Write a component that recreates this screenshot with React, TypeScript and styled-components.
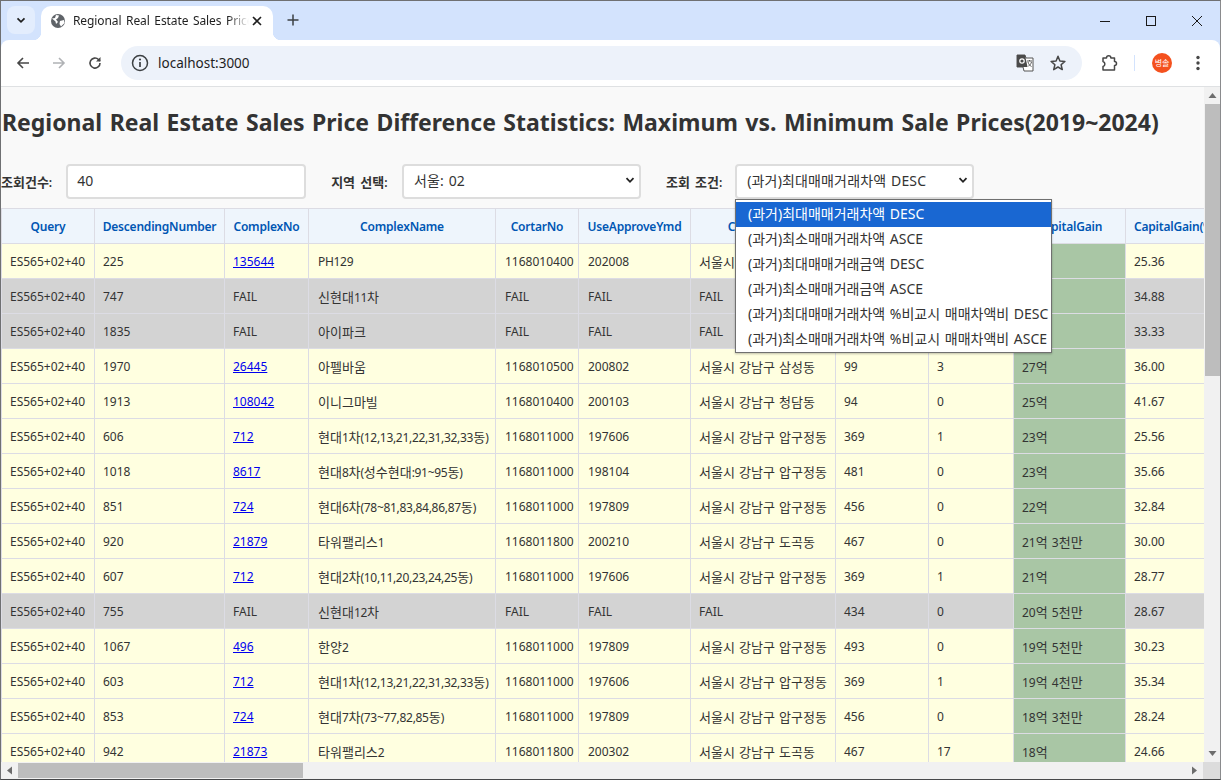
import React from "react";
import styled, { createGlobalStyle } from "styled-components";

const Global = createGlobalStyle`
  html, body { margin: 0; padding: 0; width: 1221px; height: 780px; overflow: hidden; background: #fff; }
  * { box-sizing: border-box; }
  body { font-family: "Noto Sans", "Noto Sans CJK KR", sans-serif; }
`;

const Win = styled.div`
  width: 1221px; height: 780px; display: flex; flex-direction: column;
  border: 1px solid #6f7072; border-right-color: #8a8b8d; border-bottom-color: #47484a; border-bottom-width: 1px;
  background: #d3e3fd; overflow: hidden; position: relative;
`;
const TabStrip = styled.div`
  height: 39px; flex: none; display: flex; align-items: flex-start; padding: 5px 0 0 6px; background: #d3e3fd;
`;
const TabSearch = styled.div`
  width: 28px; height: 28px; border-radius: 8px; background: #e3edfd; display: flex; align-items: center; justify-content: center;
`;
const Tab = styled.div`
  width: 232px; height: 34px; margin-left: 6px; background: #fff; border-radius: 10px 10px 0 0; display: flex; align-items: center;
  padding: 0 8px 5px 9px; position: relative;
  &::before, &::after { content: ""; position: absolute; bottom: 0; width: 8px; height: 8px; }
  &::before { left: -8px; background: radial-gradient(circle at 0 0, transparent 8px, #fff 8.5px); }
  &::after { right: -8px; background: radial-gradient(circle at 100% 0, transparent 8px, #fff 8.5px); }
`;
const TabTitle = styled.div`
  flex: 1; margin-left: 7px; font-size: 12px; letter-spacing: -0.1px; color: #1f1f1f; white-space: nowrap; overflow: hidden; word-spacing: 1.6px;
  -webkit-mask-image: linear-gradient(90deg, #000 88%, transparent 100%);
  mask-image: linear-gradient(90deg, #000 88%, transparent 100%);
`;
const NewTab = styled.div`
  margin: 4px 0 0 10px; width: 20px; height: 20px; display: flex; align-items: center; justify-content: center;
`;
const WinControls = styled.div`
  margin-left: auto; display: flex; margin-top: -5px;
`;
const WinBtn = styled.div`
  width: 46px; height: 40px; display: flex; align-items: center; justify-content: center;
`;
const Toolbar = styled.div`
  height: 47px; flex: none; background: #fff; border-radius: 8px 8px 0 0; border-bottom: 1px solid #dfe1e3;
  display: flex; align-items: center; padding: 0 0 1px 0;
`;
const NavBtn = styled.div<{ $ml: number }>`
  width: 20px; height: 20px; margin-left: ${(p) => p.$ml}px; display: flex; align-items: center; justify-content: center;
`;
const Omni = styled.div`
  width: 961px; height: 34px; margin-left: 16px; border-radius: 17px; background: #edf2fa; display: flex; align-items: center; padding: 0 14px 0 10px;
`;
const Url = styled.div`
  margin-left: 9px; font-size: 13.5px; color: #1f1f1f; flex: 1;
`;
const OmniIcon = styled.div<{ $ml: number }>`
  width: 20px; height: 20px; margin-left: ${(p) => p.$ml}px; display: flex; align-items: center; justify-content: center;
`;
const Sep = styled.div`
  width: 1px; height: 16px; background: #d3e3fd; margin: 0 17px 0 15px;
`;
const Avatar = styled.div`
  width: 20px; height: 20px; border-radius: 50%; background: #f4511e; color: #fff; font-size: 8px; display: flex; align-items: center; justify-content: center;
`;
const Page = styled.div`
  flex: 1; min-height: 0; display: flex; flex-direction: column; background: #f9f9f9;
`;
const PageRow = styled.div`
  flex: 1; min-height: 0; display: flex;
`;
const Content = styled.div`
  width: 1203px; flex: none; overflow: hidden; display: flex; flex-direction: column; position: relative;
`;
const Title = styled.h1`
  margin: 0; padding: 19px 0 0 1px; font-size: 23px; line-height: 33px; font-weight: 700; color: #333; white-space: nowrap; word-spacing: 1.5px;
`;
const Filters = styled.div`
  display: flex; align-items: center; margin-top: 25px; height: 35px;
`;
const Label = styled.label<{ $mr: number; $ml?: number }>`
  font-size: 12px; font-weight: 600; color: #333; white-space: nowrap; word-spacing: 2px; margin-right: ${(p) => p.$mr}px; margin-left: ${(p) => p.$ml || 0}px;
`;
const Field = styled.div<{ $w: number }>`
  height: 35px; width: ${(p) => p.$w}px; background: #fff; border: 2px solid #ddd; border-radius: 4px; padding: 0 4px 3px 10px; word-spacing: 1px; letter-spacing: 0.15px;
  display: flex; align-items: center; justify-content: space-between; font-size: 14px; color: #333;
`;
const InputField = styled(Field)`
  padding-left: 9px;
`;
const TableWrap = styled.div`
  margin-top: 9px; flex: 1; min-height: 0; overflow: hidden;
`;
const Table = styled.table`
  border-collapse: collapse; table-layout: fixed; width: 1224px;
`;
const Th = styled.th`
  height: 35px; padding: 0; background: #eef5fc; color: #0056b3; font-size: 12px; letter-spacing: -0.2px; font-weight: 600; border: 1px solid #dcdce4; text-align: center; white-space: nowrap; overflow: hidden;
`;
const Tr = styled.tr<{ $fail?: boolean }>`
  background: ${(p) => (p.$fail ? "#d3d3d3" : "#ffffe0")};
`;
const Td = styled.td<{ $gain?: boolean }>`
  height: 35px; padding: 0 0 0 8px; font-size: 12px; color: #333; border: 1px solid #dcdce4; white-space: nowrap; overflow: hidden; word-spacing: 1px;
  ${(p) => (p.$gain ? "background: #a9c6a5;" : "")}
  &:nth-child(4), &:nth-child(5), &:nth-child(6) { padding-left: 9px; }
  &:nth-child(4) { letter-spacing: -0.3px; }
`;
const Hangul = styled.span`
  font-size: 13px; letter-spacing: 0;
`;
const Link = styled.a`
  color: #0000ee; text-decoration: underline;
`;
const Menu = styled.div`
  position: absolute; left: 734px; top: 112px; width: 317px; height: 154px; background: #fff; border: 1px solid #707070; padding: 2px 0 0 0;
  box-shadow: 0 1px 2px rgba(0,0,0,.25);
`;
const Option = styled.div<{ $on?: boolean }>`
  height: 25px; line-height: 23px; padding-left: 12px; font-size: 14px; word-spacing: 1px; white-space: nowrap; overflow: hidden;
  color: ${(p) => (p.$on ? "#fff" : "#333")}; background: ${(p) => (p.$on ? "#1967d2" : "transparent")};
`;
const VBar = styled.div`
  width: 17px; flex: none; background: #f1f1f1; display: flex; flex-direction: column; align-items: center;
`;
const VThumb = styled.div`
  width: 15px; height: 272px; background: #bdbdbd;
`;
const Spacer = styled.div`flex: 1;`;
const ArrowBox = styled.div`
  width: 17px; height: 17px; flex: none; display: flex; align-items: center; justify-content: center;
`;
const HBar = styled.div`
  height: 17px; flex: none; background: #f1f1f1; display: flex; align-items: center;
`;
const HThumb = styled.div`
  width: 285px; height: 15px; background: #bdbdbd;
`;
const Corner = styled.div`
  width: 17px; height: 17px; background: #dcdcdc;
`;

const Chevron = ({ w = 10 }: { w?: number }) => (
  <svg width={w} height={w} viewBox="0 0 10 10" fill="none"><path d="M1.5 3.2 5 6.8l3.5-3.6" stroke="#222" strokeWidth="1.8" /></svg>
);
const Tri = ({ d }: { d: string }) => (
  <svg width="9" height="9" viewBox="0 0 9 9"><path d={d} fill="#6d6d6d" /></svg>
);
const Txt = ({ t }: { t: string }) => (
  <>{t.split(/([가-힣]+)/).map((s, i) => (i % 2 ? <Hangul key={i}>{s}</Hangul> : s))}</>
);

const S = "서울시 강남구 ";
type Row = [string, string, string, string, string, string, string, string, string, string];
const rows: Row[] = [
  ["225", "135644", "PH129", "1168010400", "202008", S + "청담동", "124", "0", "30억", "25.36"],
  ["747", "FAIL", "신현대11차", "FAIL", "FAIL", "FAIL", "434", "0", "28억", "34.88"],
  ["1835", "FAIL", "아이파크", "FAIL", "FAIL", "FAIL", "449", "0", "28억", "33.33"],
  ["1970", "26445", "아펠바움", "1168010500", "200802", S + "삼성동", "99", "3", "27억", "36.00"],
  ["1913", "108042", "이니그마빌", "1168010400", "200103", S + "청담동", "94", "0", "25억", "41.67"],
  ["606", "712", "현대1차(12,13,21,22,31,32,33동)", "1168011000", "197606", S + "압구정동", "369", "1", "23억", "25.56"],
  ["1018", "8617", "현대8차(성수현대:91~95동)", "1168011000", "198104", S + "압구정동", "481", "0", "23억", "35.66"],
  ["851", "724", "현대6차(78~81,83,84,86,87동)", "1168011000", "197809", S + "압구정동", "456", "0", "22억", "32.84"],
  ["920", "21879", "타워팰리스1", "1168011800", "200210", S + "도곡동", "467", "0", "21억 3천만", "30.00"],
  ["607", "712", "현대2차(10,11,20,23,24,25동)", "1168011000", "197606", S + "압구정동", "369", "1", "21억", "28.77"],
  ["755", "FAIL", "신현대12차", "FAIL", "FAIL", "FAIL", "434", "0", "20억 5천만", "28.67"],
  ["1067", "496", "한양2", "1168011000", "197809", S + "압구정동", "493", "0", "19억 5천만", "30.23"],
  ["603", "712", "현대1차(12,13,21,22,31,32,33동)", "1168011000", "197606", S + "압구정동", "369", "1", "19억 4천만", "35.34"],
  ["853", "724", "현대7차(73~77,82,85동)", "1168011000", "197809", S + "압구정동", "456", "0", "18억 3천만", "28.24"],
  ["942", "21873", "타워팰리스2", "1168011800", "200302", S + "도곡동", "467", "17", "18억", "24.66"],
];
const cols = [93, 130, 84, 187, 83, 112, 145, 93, 85, 112, 100];
const heads = ["Query", "DescendingNumber", "ComplexNo", "ComplexName", "CortarNo", "UseApproveYmd", "CortarName", "TotalHouse", "DealCount", "CapitalGain", "CapitalGain(%)"];
const options = [
  "(과거)최대매매거래차액 DESC",
  "(과거)최소매매거래차액 ASCE",
  "(과거)최대매매거래금액 DESC",
  "(과거)최소매매거래금액 ASCE",
  "(과거)최대매매거래차액 %비교시 매매차액비 DESC",
  "(과거)최소매매거래차액 %비교시 매매차액비 ASCE",
];

export default function App() {
  return (
    <Win>
      <Global />
      <TabStrip>
        <TabSearch>
          <svg width="12" height="12" viewBox="0 0 12 12" fill="none"><path d="M2.5 4.3 6 7.8l3.5-3.5" stroke="#1f1f1f" strokeWidth="1.7" /></svg>
        </TabSearch>
        <Tab>
          <svg width="16" height="16" viewBox="0 0 16 16"><circle cx="8" cy="8" r="7" fill="#5f6368" /><path d="M2 5.5 5 5l1-3 3 .5L8 5 6 6.5 8 9 6 11 5.500 8.500zM10 8l4-1 .5 3L11 13.500 9.500 11z" fill="#fff" /></svg>
          <TabTitle>Regional Real Estate Sales Price Difference</TabTitle>
          <svg width="16" height="16" viewBox="0 0 16 16" fill="none"><path d="M4 4l8 8M12 4l-8 8" stroke="#1f1f1f" strokeWidth="1.6" /></svg>
        </Tab>
        <NewTab>
          <svg width="14" height="14" viewBox="0 0 14 14" fill="none"><path d="M7 1.500v11M1.500 7h11" stroke="#3c4043" strokeWidth="1.5" /></svg>
        </NewTab>
        <WinControls>
          <WinBtn><svg width="12" height="12" viewBox="0 0 12 12"><path d="M1 6.500h10" stroke="#1a1a1a" strokeWidth="1" /></svg></WinBtn>
          <WinBtn><svg width="12" height="12" viewBox="0 0 12 12" fill="none"><rect x="1.500" y="1.500" width="9" height="9" stroke="#1a1a1a" /></svg></WinBtn>
          <WinBtn><svg width="12" height="12" viewBox="0 0 12 12" fill="none"><path d="M1 1l10 10M11 1 1 11" stroke="#1a1a1a" strokeWidth="1" /></svg></WinBtn>
        </WinControls>
      </TabStrip>
      <Toolbar>
        <NavBtn $ml={12}>
          <svg width="16" height="16" viewBox="0 0 16 16" fill="none"><path d="M14 8H3M8 3 3 8l5 5" stroke="#474747" strokeWidth="1.6" /></svg>
        </NavBtn>
        <NavBtn $ml={16}>
          <svg width="16" height="16" viewBox="0 0 16 16" fill="none"><path d="M2 8h11M8 3l5 5-5 5" stroke="#b0b2b5" strokeWidth="1.6" /></svg>
        </NavBtn>
        <NavBtn $ml={16}>
          <svg width="16" height="16" viewBox="0 0 16 16" fill="none"><path d="M13 8a5 5 0 1 1-1.500-3.500L13 6" stroke="#474747" strokeWidth="1.600" /><path d="M13.500 2v4.500H9z" fill="#474747" /></svg>
        </NavBtn>
        <Omni>
          <svg width="18" height="18" viewBox="0 0 18 18" fill="none"><circle cx="9" cy="9" r="7.500" stroke="#3c4043" strokeWidth="1.500" /><path d="M9 8v5" stroke="#3c4043" strokeWidth="1.700" /><circle cx="9" cy="5.500" r="1.100" fill="#3c4043" /></svg>
          <Url>localhost:3000</Url>
          <OmniIcon $ml={0}>
            <svg width="18" height="18" viewBox="0 0 18 18"><path d="M1 1h8l1 3h7v13H8l-1-4H1z" fill="#fff" stroke="#555" /><path d="M1 1h8l2.500 12H1z" fill="#4a4a4a" /><circle cx="6" cy="7" r="2.200" fill="none" stroke="#fff" strokeWidth="1.200" /><path d="M11 7h5M13.500 6v1M12 8c.5 2 2 4 3.500 4.500M15.500 8c-.5 2-2 3.500-3 4" stroke="#555" fill="none" /></svg>
          </OmniIcon>
          <OmniIcon $ml={13}>
            <svg width="18" height="18" viewBox="0 0 18 18" fill="none"><path d="M9 2.300 10.900 7l5 .4-3.800 3.300 1.200 4.900L9 13l-4.300 2.600 1.200-4.900L2.100 7.400l5-.4z" stroke="#474747" strokeWidth="1.500" strokeLinejoin="round" /></svg>
          </OmniIcon>
        </Omni>
        <NavBtn $ml={17}>
          <svg width="18" height="18" viewBox="0 0 18 18" fill="none"><path d="M3 4h3.500a2.200 2.200 0 0 1 4.400 0h3.600v3.500a2 2 0 0 1 0 4V16H3v-3.500a2.600 2.600 0 0 0 0-5z" stroke="#474747" strokeWidth="1.500" strokeLinejoin="round" /></svg>
        </NavBtn>
        <Sep />
        <Avatar>병솔</Avatar>
        <NavBtn $ml={16}>
          <svg width="16" height="16" viewBox="0 0 16 16"><circle cx="8" cy="2.500" r="1.700" fill="#474747" /><circle cx="8" cy="8" r="1.700" fill="#474747" /><circle cx="8" cy="13.500" r="1.700" fill="#474747" /></svg>
        </NavBtn>
      </Toolbar>
      <Page>
        <PageRow>
          <Content>
            <Title>Regional Real Estate Sales Price Difference Statistics: Maximum vs. Minimum Sale Prices(2019~2024)</Title>
            <Filters>
              <Label $mr={14}><Txt t="조회건수:" /></Label>
              <InputField $w={240}>40</InputField>
              <Label $mr={14.5} $ml={25}><Txt t="지역 선택:" /></Label>
              <Field $w={239}>서울: 02<Chevron /></Field>
              <Label $mr={13} $ml={25}><Txt t="조회 조건:" /></Label>
              <Field $w={239}>(과거)최대매매거래차액 DESC<Chevron /></Field>
            </Filters>
            <TableWrap>
              <Table>
                <colgroup>{cols.map((c, i) => <col key={i} style={{ width: c }} />)}</colgroup>
                <thead><tr>{heads.map((h) => <Th key={h}>{h}</Th>)}</tr></thead>
                <tbody>
                  {rows.map((r, i) => (
                    <Tr key={i} $fail={r[1] === "FAIL"}>
                      <Td>ES565+02+40</Td>
                      {r.map((c, j) => (
                        <Td key={j} $gain={j === 8}>{j === 1 && c !== "FAIL" ? <Link href="#">{c}</Link> : <Txt t={c} />}</Td>
                      ))}
                    </Tr>
                  ))}
                </tbody>
              </Table>
            </TableWrap>
            <Menu>{options.map((o, i) => <Option key={o} $on={i === 0}>{o}</Option>)}</Menu>
          </Content>
          <VBar>
            <ArrowBox><Tri d="M4.500 2 8.500 7H.5z" /></ArrowBox>
            <VThumb />
            <Spacer />
            <ArrowBox><Tri d="M4.500 7 .5 2h8z" /></ArrowBox>
          </VBar>
        </PageRow>
        <HBar>
          <ArrowBox><Tri d="M2 4.500 7 .5v8z" /></ArrowBox>
          <HThumb />
          <Spacer />
          <ArrowBox><Tri d="M7 4.500 2 8.500v-8z" /></ArrowBox>
          <Corner />
        </HBar>
      </Page>
    </Win>
  );
}
